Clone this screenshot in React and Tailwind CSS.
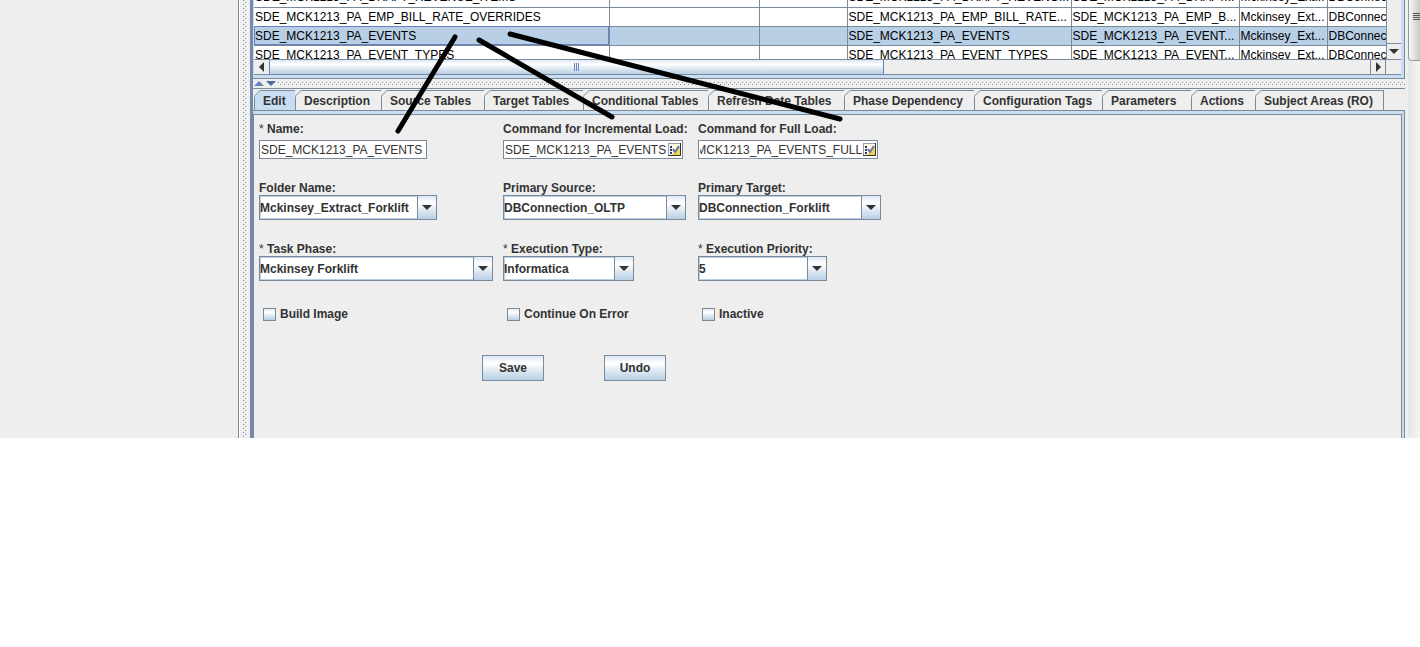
import { useEffect, useRef } from "react";
import clsx from "clsx";

const columns = [
  "w-[355px]",
  "w-[150px]",
  "w-[88px]",
  "w-[224px]",
  "w-[168px]",
  "w-[88px]",
  "w-[88px]",
];

const rows = [
  ["SDE_MCK1213_PA_DRAFT_REVENUE_ITEMS", "", "", "SDE_MCK1213_PA_DRAFT_REVENO...", "SDE_MCK1213_PA_DRAFT...", "Mckinsey_Ext...", "DBConnec"],
  ["SDE_MCK1213_PA_EMP_BILL_RATE_OVERRIDES", "", "", "SDE_MCK1213_PA_EMP_BILL_RATE...", "SDE_MCK1213_PA_EMP_B...", "Mckinsey_Ext...", "DBConnec"],
  ["SDE_MCK1213_PA_EVENTS", "", "", "SDE_MCK1213_PA_EVENTS", "SDE_MCK1213_PA_EVENT...", "Mckinsey_Ext...", "DBConnec"],
  ["SDE_MCK1213_PA_EVENT_TYPES", "", "", "SDE_MCK1213_PA_EVENT_TYPES", "SDE_MCK1213_PA_EVENT...", "Mckinsey_Ext...", "DBConnec"],
];
const selectedRow = 2;

const tabs = [
  { label: "Edit", width: "w-[42px]" },
  { label: "Description", width: "w-[86px]" },
  { label: "Source Tables", width: "w-[103px]" },
  { label: "Target Tables", width: "w-[99px]" },
  { label: "Conditional Tables", width: "w-[125px]" },
  { label: "Refresh Date Tables", width: "w-[136px]" },
  { label: "Phase Dependency", width: "w-[130px]" },
  { label: "Configuration Tags", width: "w-[128px]" },
  { label: "Parameters", width: "w-[89px]" },
  { label: "Actions", width: "w-[64px]" },
  { label: "Subject Areas (RO)", width: "w-[128px]" },
];

const metal = "bg-linear-to-b from-[#dde8f3] via-white via-30% to-[#b8cfe5]";

// Dotted grip used on both splitters
function Grip({ id, className }) {
  return (
    <svg className={className} aria-hidden="true">
      <defs>
        <pattern id={id} width="4" height="4" patternUnits="userSpaceOnUse">
          <rect width="1" height="1" fill="#7a8a99" />
          <rect x="2" y="2" width="1" height="1" fill="#7a8a99" />
          <rect x="1" y="1" width="1" height="1" fill="#fff" />
          <rect x="3" y="3" width="1" height="1" fill="#fff" />
        </pattern>
      </defs>
      <rect width="100%" height="100%" fill={`url(#${id})`} />
    </svg>
  );
}

function Arrow({ dir = "down", color = "#333" }) {
  const points = {
    down: "0,0 10,0 5,5",
    up: "0,5 10,5 5,0",
    left: "5,0 5,10 0,5",
    right: "0,0 0,10 5,5",
  }[dir];
  const tall = dir === "left" || dir === "right";
  return (
    <svg width={tall ? 5 : 10} height={tall ? 10 : 5} aria-hidden="true">
      <polygon points={points} fill={color} />
    </svg>
  );
}

function TaskGrid() {
  return (
    <div className="flex flex-col border-b border-[#7a8a99]">
      <div className="flex h-[60px] border-b border-[#7a8a99]">
        <div className="min-w-0 flex-1 overflow-hidden bg-white">
          <table className="-mt-3 w-[1161px] table-fixed border-collapse text-[12px] leading-[18px] text-black">
            <colgroup>
              {columns.map((w, i) => (
                <col key={i} className={w} />
              ))}
            </colgroup>
            <tbody>
              {rows.map((row, r) => (
                <tr key={r} className={clsx("h-[19px]", r === selectedRow && "bg-[#b8cfe5]")}>
                  {row.map((cell, c) => (
                    <td
                      key={c}
                      className={clsx(
                        "overflow-hidden border-r border-b border-[#7a8a99] p-0 pl-px whitespace-nowrap",
                        r === selectedRow && c === 0 && "outline -outline-offset-1 outline-[#6382bf]"
                      )}
                    >
                      {cell}
                    </td>
                  ))}
                </tr>
              ))}
            </tbody>
          </table>
        </div>
        <div className="flex w-[15px] flex-col justify-end border-l border-[#7a8a99] bg-[#eee]">
          <button aria-label="Scroll down" className="flex h-4 items-center justify-center border-t border-[#7a8a99]">
            <Arrow />
          </button>
        </div>
      </div>
      <div className="flex h-[14px]">
        <button aria-label="Scroll left" className="flex w-[15px] items-center justify-center">
          <Arrow dir="left" />
        </button>
        <div className="flex-1">
          <div className={clsx("flex h-full w-[615px] items-center justify-center gap-px border-x border-[#6382bf]", metal)}>
            <span className="h-2 w-px bg-[#6382bf]" />
            <span className="h-2 w-px bg-[#6382bf]" />
            <span className="h-2 w-px bg-[#6382bf]" />
          </div>
        </div>
        <button aria-label="Scroll right" className="flex w-4 items-center justify-center border-x border-[#7a8a99]">
          <Arrow dir="right" />
        </button>
        <div className="w-[15px]" />
      </div>
    </div>
  );
}

function Tab({ label, width, active }) {
  return (
    <button
      role="tab"
      aria-selected={active}
      className={clsx(
        "relative h-5 shrink-0 border-t border-r border-[#7a8a99] pl-2 text-left leading-[18px] font-bold whitespace-nowrap",
        width,
        active && "border-l bg-[#c8ddf2]"
      )}
    >
      <svg className="absolute -top-px -left-px" width="7" height="7" aria-hidden="true">
        <path d="M0 0H7L0 7Z" fill="#eee" />
        <path d="M0 6.5L6.5 0" stroke="#7a8a99" />
      </svg>
      {label}
    </button>
  );
}

function FieldLabel({ htmlFor, required, children }) {
  return (
    <label htmlFor={htmlFor} className="block h-4 leading-[18px] font-bold whitespace-nowrap">
      {required && <span className="font-normal">{"* "}</span>}
      {children}
    </label>
  );
}

function Combo({ id, label, value, width, required }) {
  return (
    <div>
      <FieldLabel htmlFor={id} required={required}>{label}</FieldLabel>
      <div className={clsx("relative h-[25px]", width)}>
        <select
          id={id}
          defaultValue={value}
          className="h-full w-full appearance-none border border-[#7a8a99] bg-white pr-5 font-bold shadow-[inset_0_0_0_1px_#b8cfe5] outline-none"
        >
          <option>{value}</option>
        </select>
        <span
          className={clsx(
            "pointer-events-none absolute inset-y-0 right-0 flex w-5 items-center justify-center border border-[#7a8a99]",
            metal
          )}
        >
          <Arrow />
        </span>
      </div>
    </div>
  );
}

function EditIcon() {
  return (
    <svg width="13" height="13" viewBox="0 0 13 13" aria-hidden="true">
      <rect x="0.5" y="0.5" width="12" height="12" fill="#fffbe0" stroke="#99a" />
      <path d="M12 4V12H4Z" fill="#f5d64a" />
      <path d="M12.5 0V12.5H0" fill="none" stroke="#333" />
      <path d="M2 3h2v2H2zM2 6h2v2H2zM2 9h2v2H2z" fill="#223a8c" />
      <path d="M5 6L7 9L11 3" fill="none" stroke="#6470b8" strokeWidth="2" />
    </svg>
  );
}

function CommandField({ id, label, value }) {
  const ref = useRef(null);

  // long commands show their tail
  useEffect(() => {
    ref.current.scrollLeft = ref.current.scrollWidth;
  }, []);

  return (
    <div>
      <FieldLabel htmlFor={id}>{label}</FieldLabel>
      <div className="mt-1 flex h-[19px] w-[180px] items-center border border-[#7a8a99] bg-white">
        <input ref={ref} id={id} defaultValue={value} className="ml-px h-full w-[162px] outline-none" />
        <button aria-label={`Edit ${label}`} className="ml-px">
          <EditIcon />
        </button>
      </div>
    </div>
  );
}

function Check({ id, label }) {
  return (
    <div className="flex items-center gap-1 pl-1">
      <input id={id} type="checkbox" className={clsx("size-[13px] appearance-none border border-[#7a8a99]", metal)} />
      <label htmlFor={id} className="leading-[18px] font-bold">{label}</label>
    </div>
  );
}

function PushButton({ children }) {
  return (
    <button className={clsx("h-[26px] w-[62px] border border-[#7a8a99] text-center font-bold", metal)}>
      {children}
    </button>
  );
}

function EditForm() {
  return (
    <form className="pt-[5px] pb-[57px] pl-[5px]" onSubmit={(e) => e.preventDefault()}>
      <div className="grid grid-cols-[244px_195px_auto]">
        <div className="h-[59px]">
          <FieldLabel htmlFor="name" required>Name:</FieldLabel>
          <input
            id="name"
            defaultValue="SDE_MCK1213_PA_EVENTS"
            className="mt-1 block h-[19px] w-[168px] border border-[#7a8a99] bg-white px-px outline-none"
          />
        </div>
        <CommandField id="incremental" label="Command for Incremental Load:" value="SDE_MCK1213_PA_EVENTS" />
        <CommandField id="full" label="Command for Full Load:" value="SDE_MCK1213_PA_EVENTS_FULL" />

        <div className="h-[61px]">
          <Combo id="folder" label="Folder Name:" value="Mckinsey_Extract_Forklift" width="w-[178px]" />
        </div>
        <Combo id="source" label="Primary Source:" value="DBConnection_OLTP" width="w-[183px]" />
        <Combo id="target" label="Primary Target:" value="DBConnection_Forklift" width="w-[183px]" />

        <div className="h-[65px]">
          <Combo id="phase" required label="Task Phase:" value="Mckinsey Forklift" width="w-[234px]" />
        </div>
        <Combo id="type" required label="Execution Type:" value="Informatica" width="w-[131px]" />
        <Combo id="priority" required label="Execution Priority:" value="5" width="w-[129px]" />

        <Check id="build" label="Build Image" />
        <Check id="continue" label="Continue On Error" />
        <Check id="inactive" label="Inactive" />
      </div>
      <div className="mt-8 flex gap-[60px] pl-[223px]">
        <PushButton>Save</PushButton>
        <PushButton>Undo</PushButton>
      </div>
    </form>
  );
}

export default function App() {
  return (
    <div className="min-h-screen bg-white">
      <div className="relative flex overflow-hidden bg-[#eee] font-['Liberation_Sans',Arial,sans-serif] text-[12px] text-[#333]">
        <aside className="w-[239px] shrink-0 border-r border-[#7a8a99]" />
        <div className="flex w-[11px] shrink-0 justify-center border-l border-white">
          <Grip id="grip-v" className="h-full w-1" />
        </div>

        <main className="min-w-0 flex-1 border-l-3 border-[#7489ab]">
          <div className="border-r border-b border-[#7a8a99]">
            <div className="border-r-3 border-b-3 border-l border-[#c8ddf2]">
              <TaskGrid />
            </div>
          </div>

          <div className="flex h-[9px] items-center gap-0.5 pl-px">
            <Arrow dir="up" color="#6382bf" />
            <Arrow color="#4d6a9e" />
            <Grip id="grip-h" className="h-1 flex-1" />
          </div>

          <div role="tablist" className="flex h-[22px] items-end border-t border-[#7a8a99] pl-px">
            {tabs.map((tab, i) => (
              <Tab key={tab.label} {...tab} active={i === 0} />
            ))}
          </div>
          <div className="border-t border-r border-[#7a8a99]">
            <div className="border-t-3 border-r-2 border-[#c8ddf2]">
              <div className="border-t border-r border-l border-[#7a8a99]">
                <EditForm />
              </div>
            </div>
          </div>
        </main>

        <div className="ml-[3px] w-3 shrink-0 bg-linear-to-r from-[#e6e6e6] to-[#f4f4f4]">
          <div className="flex h-[61px] flex-col items-end gap-px rounded-bl-sm border-b border-l border-[#999] bg-linear-to-r from-[#f8f8f8] to-[#c8c8c8] pt-[13px]">
            <span className="h-px w-[7px] bg-[#555]" />
            <span className="h-px w-[7px] bg-[#555]" />
            <span className="h-px w-[7px] bg-[#555]" />
            <span className="h-px w-[7px] bg-[#555]" />
          </div>
        </div>

        {/* pointers from the selected task to its fields */}
        <svg className="pointer-events-none absolute top-0 left-0" width="900" height="140" aria-hidden="true">
          <g stroke="#000" strokeWidth="5" strokeLinecap="round">
            <path d="M455 37L398 131" />
            <path d="M479 40L612 117" />
            <path d="M510 34L840 119" />
          </g>
        </svg>
      </div>
    </div>
  );
}
